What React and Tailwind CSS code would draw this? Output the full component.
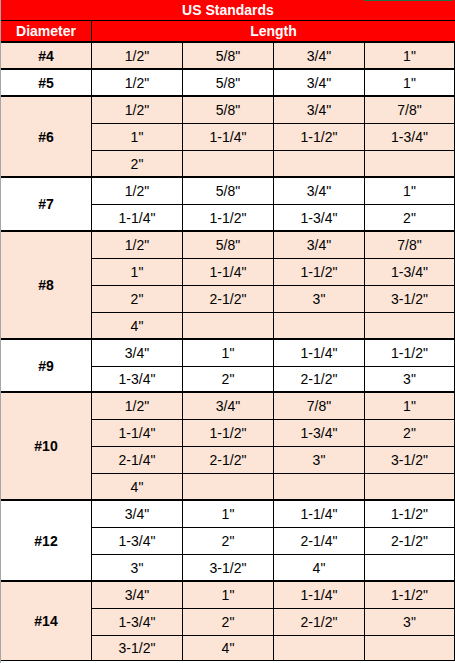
const groups = [
  { d: "#4", bg: "bg-[#fce4d6]", rows: [['1/2"', '5/8"', '3/4"', '1"']] },
  { d: "#5", bg: "bg-white", rows: [['1/2"', '5/8"', '3/4"', '1"']] },
  {
    d: "#6",
    bg: "bg-[#fce4d6]",
    rows: [
      ['1/2"', '5/8"', '3/4"', '7/8"'],
      ['1"', '1-1/4"', '1-1/2"', '1-3/4"'],
      ['2"', "", "", ""],
    ],
  },
  {
    d: "#7",
    bg: "bg-white",
    rows: [
      ['1/2"', '5/8"', '3/4"', '1"'],
      ['1-1/4"', '1-1/2"', '1-3/4"', '2"'],
    ],
  },
  {
    d: "#8",
    bg: "bg-[#fce4d6]",
    rows: [
      ['1/2"', '5/8"', '3/4"', '7/8"'],
      ['1"', '1-1/4"', '1-1/2"', '1-3/4"'],
      ['2"', '2-1/2"', '3"', '3-1/2"'],
      ['4"', "", "", ""],
    ],
  },
  {
    d: "#9",
    bg: "bg-white",
    short: true,
    rows: [
      ['3/4"', '1"', '1-1/4"', '1-1/2"'],
      ['1-3/4"', '2"', '2-1/2"', '3"'],
    ],
  },
  {
    d: "#10",
    bg: "bg-[#fce4d6]",
    rows: [
      ['1/2"', '3/4"', '7/8"', '1"'],
      ['1-1/4"', '1-1/2"', '1-3/4"', '2"'],
      ['2-1/4"', '2-1/2"', '3"', '3-1/2"'],
      ['4"', "", "", ""],
    ],
  },
  {
    d: "#12",
    bg: "bg-white",
    rows: [
      ['3/4"', '1"', '1-1/4"', '1-1/2"'],
      ['1-3/4"', '2"', '2-1/4"', '2-1/2"'],
      ['3"', '3-1/2"', '4"', ""],
    ],
  },
  {
    d: "#14",
    bg: "bg-[#fce4d6]",
    last: true,
    rows: [
      ['3/4"', '1"', '1-1/4"', '1-1/2"'],
      ['1-3/4"', '2"', '2-1/2"', '3"'],
      ['3-1/2"', '4"', "", ""],
    ],
  },
];

function rowHeight(group, i) {
  const isLast = i === group.rows.length - 1;
  if (!isLast) return "h-[27px] border-b border-black";
  if (group.last) return "h-[24px]";
  if (group.short) return "h-[24px]";
  return "h-[25px]";
}

const Group = ({ group }) => (
  <div
    className={`flex ${group.bg} ${
      group.last ? "border-b border-black" : "border-b-2 border-black"
    }`}
  >
    <div className="w-[91px] shrink-0 border-r border-black flex items-center justify-center font-bold">
      {group.d}
    </div>
    <div className="flex flex-col">
      {group.rows.map((row, i) => (
        <div key={i} className={`flex ${rowHeight(group, i)}`}>
          {row.map((v, j) => (
            <div
              key={j}
              className={`${
                j === 3 ? "w-[90px]" : "w-[91px]"
              } border-r border-black flex items-center justify-center`}
            >
              {v}
            </div>
          ))}
        </div>
      ))}
    </div>
  </div>
);

export default function App() {
  return (
    <div
      className="relative w-[455px] h-[663px] bg-white border-l border-[#a6a6a6] text-[14px] text-black leading-none overflow-hidden"
      style={{ fontFamily: '"Liberation Sans", Arial, sans-serif' }}
    >
      <div className="absolute top-0 left-[363px] w-[89px] h-[1px] bg-[#217346]" />
      <div className="h-[21px] bg-[#ff0000] border-b border-black flex items-center justify-center text-white font-bold">
        US Standards
      </div>
      <div className="h-[22px] bg-[#ff0000] border-b-2 border-black flex text-white font-bold">
        <div className="w-[91px] border-r border-black flex items-center justify-center">
          Diameter
        </div>
        <div className="flex-1 flex items-center justify-center">Length</div>
      </div>
      {groups.map((g) => (
        <Group key={g.d} group={g} />
      ))}
    </div>
  );
}
